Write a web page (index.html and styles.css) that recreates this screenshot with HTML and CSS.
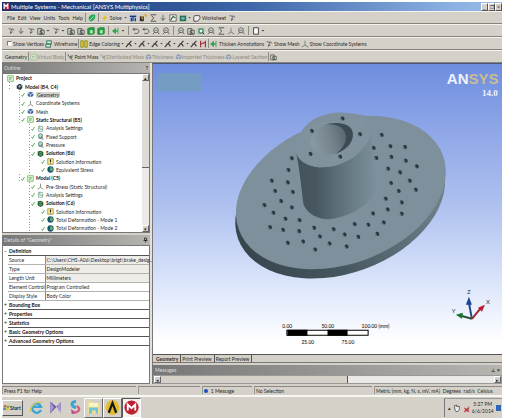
FILE: index.html
```html
<!DOCTYPE html>
<html lang="en">
<head>
<meta charset="utf-8">
<title>Multiple Systems - Mechanical [ANSYS Multiphysics]</title>
<link rel="stylesheet" href="styles.css">
</head>
<body>
<svg class="defs" aria-hidden="true">
  <symbol id="check" viewBox="0 0 10 10"><path d="M1 6l2 3 4-7" fill="none" stroke="#389a3c" stroke-width="1.6"/></symbol>
  <symbol id="cube" viewBox="0 0 10 10"><path d="M1 3l4-2 4 2v4l-4 2-4-2z" fill="#476a9c"/><path d="M1 3l4 2v4M5 5l4-2" stroke="#dbe8f8" fill="none"/></symbol>
  <symbol id="model" viewBox="0 0 10 10"><path d="M1 4l4-3 4 2v4L6 10 1 8z" fill="#303740"/><path d="M3 5l3 1 2-3M5 3v3" stroke="#b8c8d0" fill="none"/></symbol>
  <symbol id="axes" viewBox="0 0 10 10"><path d="M5 1v5L1 9m4-3l4 3" fill="none" stroke="#7f8a7f" stroke-width="1.300"/></symbol>
  <symbol id="env" viewBox="0 0 10 10"><path d="M1 1h8v8H1z" fill="#e9f7de" stroke="#5caf4a"/><path d="M3 4h4M3 6h3" stroke="#338a42"/></symbol>
  <symbol id="set" viewBox="0 0 10 10"><path d="M2 2h6v7H2z" fill="#f4fbf6" stroke="#78a68b"/><path d="M4 1v5h5" fill="none" stroke="#789"/></symbol>
  <symbol id="load" viewBox="0 0 10 10"><circle cx="5" cy="4" r="3" fill="#b9d6cb" stroke="#3d7167"/><path d="M2 7l7 2M6 5l3 3" stroke="#2c6651"/></symbol>
  <symbol id="sol" viewBox="0 0 10 10"><path d="M1 2l4-1 4 2v5l-4 2-4-2z" fill="#285e35"/><path d="M3 4h4M3 7h4" stroke="#9fd79a"/></symbol>
  <symbol id="info" viewBox="0 0 10 10"><path d="M1 1h8v8H1z" fill="#f6e68c" stroke="#988b38"/><path d="M5 2v4m0 1v1" stroke="#202020" stroke-width="1.5"/></symbol>
  <symbol id="result" viewBox="0 0 10 10"><circle cx="5" cy="5" r="4.500" fill="#1d5372"/><path d="M5 1a4 4 0 0 1 2 7L4 6z" fill="#58b663"/></symbol>
  <symbol id="green" viewBox="0 0 10 10"><path d="M1 7C0 2 5 0 9 1c1 5-3 9-7 8z" fill="#28a65b"/><path d="M2 8l5-5" stroke="#c9f4d3"/></symbol>
  <symbol id="bolt" viewBox="0 0 10 10"><path d="M7 0L1 6h3L2 10l6-6H5z" fill="#e6bd20"/></symbol>
  <symbol id="chart" viewBox="0 0 10 10"><path d="M1 1h8v8H1z" fill="#9ab2dc"/><path d="M1 3h8M3 9V5m2 4V3m3 6V5" stroke="#1d3770" stroke-width="1.400"/></symbol>
  <symbol id="tag" viewBox="0 0 10 10"><path d="M1 3h5v6H1z" fill="#28292c"/><path d="M3 4h1v3m2-6h3v3" stroke="#d5a642" stroke-width="1.500" fill="none"/></symbol>
  <symbol id="sigma" viewBox="0 0 10 10"><path d="M2 1h7M2 9h7M3 2l3 3-3 3" fill="none" stroke="#383838"/></symbol>
  <symbol id="down" viewBox="0 0 10 10"><path d="M5 1v7M2 5l3 3 3-3" fill="none" stroke="#555"/></symbol>
  <symbol id="pic" viewBox="0 0 10 10"><path d="M1 1h8v8H1z" fill="#f4f4f4" stroke="#555"/><path d="M2 8l3-5 3 2" fill="none" stroke="#40684d" stroke-width="1.500"/></symbol>
  <symbol id="pic2" viewBox="0 0 10 10"><path d="M1 2h8v7H1z" fill="#247349"/><path d="M3 4h4v3H3z" fill="#74b8d6"/></symbol>
  <symbol id="sheet" viewBox="0 0 10 10"><path d="M2 2h6l1 3-3 4H1V4z" fill="#eee" stroke="#333"/></symbol>
  <symbol id="page" viewBox="0 0 10 10"><path d="M2 1h6v8H2z" fill="#fff" stroke="#222"/></symbol>
  <symbol id="pick" viewBox="0 0 10 10"><path d="M2 2l4 1-2 5M6 2l3 2M4 8l3-2" fill="none" stroke="#4f4f4f"/></symbol>
  <symbol id="pickbox" viewBox="0 0 10 10"><path d="M1 2h5v7H1zM4 4h5v5H4z" fill="#d6e0d4" stroke="#444"/><path d="M4 5l4 4" stroke="#333"/></symbol>
  <symbol id="body" viewBox="0 0 10 10"><path d="M1 2l3-1h5v7l-2 1H1z" fill="#23a945" stroke="#187332"/><path d="M4 4h3v4H4z" fill="#c4edba"/></symbol>
  <symbol id="rotate" viewBox="0 0 10 10"><path d="M3 1L1 3l3 1M2 3c7-2 8 3 5 5H3" fill="none" stroke="#444"/></symbol>
  <symbol id="zoom" viewBox="0 0 10 10"><circle cx="5" cy="4" r="3" fill="#e4e6e6" stroke="#4c4c4c"/><path d="M1 9l3-3m3 0l2 3M3 4h4" stroke="#4c4c4c"/></symbol>
  <symbol id="fit" viewBox="0 0 10 10"><path d="M1 1h8v8H1z" fill="#87b494"/><circle cx="5" cy="5" r="2.500" fill="#e8fff0" stroke="#126335"/><path d="M7 7l2 2" stroke="#111"/></symbol>
  <symbol id="edge" viewBox="0 0 10 10"><path d="M1 9L8 1M3 5h3l2 3" fill="none" stroke="#333" stroke-width="1.300"/></symbol>
  <symbol id="mark" viewBox="0 0 10 10"><path d="M2 1v8M8 1v8M2 5l6-2" stroke="#a2363e" stroke-width="1.500"/></symbol>
  <symbol id="wire" viewBox="0 0 10 10"><path d="M2 1h6v4H2zM1 5h6v4H1z" fill="#cbe6d5" stroke="#236454"/></symbol>
  <symbol id="bars" viewBox="0 0 10 10"><path d="M1 1h3v8H1zM6 1h3v8H6z" fill="#ead128" stroke="#7c831b"/></symbol>
  <symbol id="arrow" viewBox="0 0 10 10"><path d="M0 5l5-4v3h2V1h1v8H7V6H5v3z" fill="#35a34e"/></symbol>
  <symbol id="mass" viewBox="0 0 10 10"><path d="M1 1l3 5m0 0l4-3M4 6l4 3" stroke="#333"/><circle cx="6" cy="5" r="2" fill="#62816b"/></symbol>
</svg>
<div class="window">
  <header class="title"><svg class="icon" viewBox="0 0 10 10"><path d="M0 0h10v10H0z" fill="#b41930"/><path d="M2 9V1l3 4 3-4v8" stroke="#fff" stroke-width="2" fill="none"/></svg>
    <h1>Multiple Systems - Mechanical [ANSYS Multiphysics]</h1>
    <div class="winbtns"><button aria-label="Minimize">_</button><button aria-label="Restore">❐</button><button aria-label="Close">×</button></div>
  </header>
  <nav class="bar menu">
    <div class="menus"><button>File</button><button>Edit</button><button>View</button><button>Units</button><button>Tools</button><button>Help</button></div><i class="sep"></i>
    <button aria-label="Connect"><svg class="icon"><use href="#green"/></svg></button><i class="sep"></i>
    <button><svg class="icon"><use href="#bolt"/></svg>Solve&nbsp; <b class="dd"></b></button>
    <button aria-label="Chart"><svg class="icon"><use href="#chart"/></svg></button>
    <button aria-label="Comment"><svg class="icon"><use href="#tag"/></svg></button>
    <button aria-label="Formula"><svg class="icon"><use href="#sigma"/></svg></button>
    <button aria-label="Insert"><svg class="icon"><use href="#down"/></svg></button>
    <button aria-label="Figure"><svg class="icon"><use href="#pic"/></svg></button>
    <button aria-label="Image"><svg class="icon"><use href="#pic2"/></svg><b class="dd"></b></button>
    <button><svg class="icon"><use href="#sheet"/></svg>Worksheet</button>
    <button aria-label="Information"><svg class="icon"><use href="#pick"/></svg></button>
  </nav>
  <div class="bar picks">
    <button aria-label="Label"><svg class="icon"><use href="#pick"/></svg></button>
    <button aria-label="Direction"><svg class="icon"><use href="#down"/></svg></button>
    <button aria-label="Coordinates"><svg class="icon"><use href="#pick"/></svg></button>
    <button aria-label="Select mode"><svg class="icon"><use href="#pickbox"/></svg><b class="dd"></b></button>
    <button aria-label="Select type"><svg class="icon"><use href="#pick"/></svg><b class="dd"></b></button>
    <button aria-label="Vertex"><svg class="icon"><use href="#pickbox"/></svg></button>
    <button aria-label="Edge"><svg class="icon"><use href="#pickbox"/></svg></button>
    <button aria-label="Face"><svg class="icon"><use href="#body"/></svg></button>
    <button aria-label="Body"><svg class="icon"><use href="#body"/></svg></button><i class="sep"></i>
    <button aria-label="Extend"><svg class="icon"><use href="#arrow"/></svg><b class="dd"></b></button><i class="sep"></i>
    <button aria-label="Rotate"><svg class="icon"><use href="#rotate"/></svg></button>
    <button aria-label="Pan"><svg class="icon"><use href="#rotate"/></svg></button>
    <button aria-label="Zoom"><svg class="icon"><use href="#zoom"/></svg></button>
    <button aria-label="Box zoom"><svg class="icon"><use href="#zoom"/></svg></button><i class="sep"></i>
    <button aria-label="Fit"><svg class="icon"><use href="#zoom"/></svg></button>
    <button aria-label="Magnifier"><svg class="icon"><use href="#pickbox"/></svg></button>
    <button aria-label="Zoom selection"><svg class="icon"><use href="#fit"/></svg></button>
    <button aria-label="Previous view"><svg class="icon"><use href="#zoom"/></svg></button>
    <button aria-label="Next view"><svg class="icon"><use href="#sigma"/></svg></button>
    <button aria-label="Isometric"><svg class="icon"><use href="#axes"/></svg></button>
    <button aria-label="Look at"><svg class="icon"><use href="#zoom"/></svg></button><i class="sep"></i>
    <button aria-label="Viewports"><svg class="icon"><use href="#page"/></svg><b class="dd"></b></button>
  </div>
  <div class="bar view">
    <label><input type="checkbox">Show Vertices</label>
    <button><svg class="icon"><use href="#wire"/></svg>Wireframe</button><i class="sep"></i>
    <button><svg class="icon"><use href="#bars"/></svg>Edge Coloring <b class="dd"></b></button>
    <button aria-label="Free edges"><svg class="icon"><use href="#edge"/></svg><b class="dd"></b></button>
    <button aria-label="Single edges"><svg class="icon"><use href="#edge"/></svg><b class="dd"></b></button>
    <button aria-label="Double edges"><svg class="icon"><use href="#edge"/></svg><b class="dd"></b></button>
    <button aria-label="Triple edges"><svg class="icon"><use href="#edge"/></svg><b class="dd"></b></button>
    <button aria-label="Multiple edges"><svg class="icon"><use href="#edge"/></svg><b class="dd"></b></button>
    <button aria-label="Thick edges"><svg class="icon"><use href="#edge"/></svg></button>
    <button aria-label="Edge direction"><svg class="icon"><use href="#mark"/></svg></button><i class="sep"></i>
    <button><svg class="icon"><use href="#arrow"/></svg>Thicken Annotations</button>
    <button><svg class="icon"><use href="#pick"/></svg>Show Mesh</button>
    <button><svg class="icon"><use href="#axes"/></svg>Show Coordinate Systems</button>
  </div>
  <div class="bar context">
    <span>Geometry</span><i class="sep"></i>
    <button disabled><svg class="icon"><use href="#env"/></svg>Virtual Body</button><i class="sep"></i>
    <button><svg class="icon"><use href="#mass"/></svg>Point Mass</button>
    <button disabled><svg class="icon"><use href="#mass"/></svg>Distributed Mass</button>
    <button disabled><svg class="icon"><use href="#cube"/></svg>Thickness</button>
    <button disabled><svg class="icon"><use href="#cube"/></svg>Imported Thickness</button>
    <button disabled><svg class="icon"><use href="#cube"/></svg>Layered Section</button><i class="sep"></i>
    <button aria-label="Options"><svg class="icon"><use href="#pickbox"/></svg></button>
  </div>
  <main class="work">
    <aside class="side">
      <h2 class="head"><span>Outline</span><b>?</b></h2>
      <div class="outline">
        <ul class="tree">
          <li class="l0 strong"><svg class="icon"><use href="#env"/></svg>Project</li>
          <li class="l1 strong"><svg class="icon"><use href="#model"/></svg>Model (B4, C4)</li>
          <li class="l2"><svg class="tick"><use href="#check"/></svg><svg class="icon"><use href="#cube"/></svg><span class="sel">Geometry</span></li>
          <li class="l2"><svg class="tick"><use href="#check"/></svg><svg class="icon"><use href="#axes"/></svg>Coordinate Systems</li>
          <li class="l2"><svg class="tick"><use href="#check"/></svg><svg class="icon"><use href="#cube"/></svg>Mesh</li>
          <li class="l2 strong"><svg class="tick"><use href="#check"/></svg><svg class="icon"><use href="#env"/></svg>Static Structural (B5)</li>
          <li class="l3"><svg class="tick"><use href="#check"/></svg><svg class="icon"><use href="#set"/></svg>Analysis Settings</li>
          <li class="l3"><svg class="tick"><use href="#check"/></svg><svg class="icon"><use href="#load"/></svg>Fixed Support</li>
          <li class="l3"><svg class="tick"><use href="#check"/></svg><svg class="icon"><use href="#load"/></svg>Pressure</li>
          <li class="l3 strong"><svg class="tick"><use href="#check"/></svg><svg class="icon"><use href="#sol"/></svg>Solution (B6)</li>
          <li class="l4"><svg class="tick"><use href="#check"/></svg><svg class="icon"><use href="#info"/></svg>Solution Information</li>
          <li class="l4"><svg class="tick"><use href="#check"/></svg><svg class="icon"><use href="#result"/></svg>Equivalent Stress</li>
          <li class="l2 strong"><svg class="tick"><use href="#check"/></svg><svg class="icon"><use href="#env"/></svg>Modal (C5)</li>
          <li class="l3"><svg class="tick"><use href="#check"/></svg><svg class="icon"><use href="#axes"/></svg>Pre-Stress (Static Structural)</li>
          <li class="l3"><svg class="tick"><use href="#check"/></svg><svg class="icon"><use href="#set"/></svg>Analysis Settings</li>
          <li class="l3 strong"><svg class="tick"><use href="#check"/></svg><svg class="icon"><use href="#sol"/></svg>Solution (C6)</li>
          <li class="l4"><svg class="tick"><use href="#check"/></svg><svg class="icon"><use href="#info"/></svg>Solution Information</li>
          <li class="l4"><svg class="tick"><use href="#check"/></svg><svg class="icon"><use href="#result"/></svg>Total Deformation - Mode 1</li>
          <li class="l4"><svg class="tick"><use href="#check"/></svg><svg class="icon"><use href="#result"/></svg>Total Deformation - Mode 2</li>
        </ul>
        <div class="vscroll"><button aria-label="Scroll up">▴</button><span class="vthumb"></span><span class="vtrack"></span><button aria-label="Scroll down">▾</button></div>
      </div>
      <h2 class="head gap"><span>Details of "Geometry"</span><svg class="pin" viewBox="0 0 10 10"><path d="M3 1h4v5H3zM1 6h8M5 6v4" fill="none" stroke="#222" stroke-width="1.500"/></svg></h2>
      <div class="details">
        <table>
          <colgroup><col class="c-ex"><col class="c-key"><col></colgroup>
          <tr><td class="ex">−</td><th colspan="2">Definition</th></tr>
          <tr class="ro"><td class="ex"></td><td class="key">Source</td><td>C:\Users\CHS-A06\Desktop\brigt\brake_desig...</td></tr>
          <tr class="ro"><td class="ex"></td><td class="key">Type</td><td>DesignModeler</td></tr>
          <tr class="ro"><td class="ex"></td><td class="key">Length Unit</td><td>Millimeters</td></tr>
          <tr><td class="ex"></td><td class="key">Element Control</td><td>Program Controlled</td></tr>
          <tr><td class="ex"></td><td class="key">Display Style</td><td>Body Color</td></tr>
          <tr><td class="ex">+</td><th colspan="2">Bounding Box</th></tr>
          <tr><td class="ex">+</td><th colspan="2">Properties</th></tr>
          <tr><td class="ex">+</td><th colspan="2">Statistics</th></tr>
          <tr><td class="ex">+</td><th colspan="2">Basic Geometry Options</th></tr>
          <tr><td class="ex">+</td><th colspan="2">Advanced Geometry Options</th></tr>
        </table>
      </div>
    </aside>
    <section class="stage">
      <svg class="scene" viewBox="0 0 348 289" preserveAspectRatio="xMidYMid meet" role="img" aria-label="Brake disc model">
        <defs>
          <linearGradient id="cyl"><stop offset="0" stop-color="#43525c"/><stop offset=".25" stop-color="#485861"/><stop offset=".6" stop-color="#62757f"/><stop offset="1" stop-color="#7c909b"/></linearGradient>
          <linearGradient id="rim"><stop offset="0" stop-color="#37454e"/><stop offset=".4" stop-color="#45565f"/><stop offset="1" stop-color="#74858f"/></linearGradient>
          <linearGradient id="bore"><stop offset="0" stop-color="#8b9ba5"/><stop offset=".5" stop-color="#74838c"/><stop offset="1" stop-color="#4c5b64"/></linearGradient>
          <g id="hole"><circle r="6.500" fill="#5b6d77"/><path d="M-5-4a6 6 0 0 1 9 1 6 6 0 0 1-3 9z" fill="#263640"/></g>
        </defs>
        <rect x="5" y="9" width="43" height="18" fill="#759dc4"/>
        <g transform="translate(76 36) scale(.3333)">
          <ellipse cx="332" cy="304" rx="325" ry="214" transform="rotate(-20 332 304)" fill="url(#rim)"/>
          <ellipse cx="334" cy="276" rx="325" ry="214" transform="rotate(-20 334 276)" fill="#7d909c"/>
          <path d="M214 96C240 55 285 36 338 37C365 38 382 43 400 44L424 95L208 170z" fill="#7d909c"/>
          <path d="M201 160C220 207 300 212 350 183C395 160 415 130 424 98C430 130 439 220 438 268C438 300 365 351 300 356C258 356 226 333 221 305C216 260 210 205 201 160z" fill="url(#cyl)"/>
          <path d="M201 160C220 207 300 212 350 183C395 160 415 130 424 98L395 50L250 70L200 110z" fill="#7f929e"/>
          <ellipse cx="306" cy="117" rx="64" ry="45" transform="rotate(-15 306 117)" fill="url(#bore)"/>
          <path d="M280 75C330 60 366 72 370 98C372 128 344 151 318 161C360 133 360 84 318 74C305 71 292 72 280 75z" fill="#3b4a54"/>
          <g class="holes">
            <use href="#hole" x="339" y="55"/><use href="#hole" x="247" y="92"/><use href="#hole" x="391" y="102"/><use href="#hole" x="243" y="161"/><use href="#hole" x="332" y="169"/>
            <use href="#hole" x="456" y="104"/><use href="#hole" x="432" y="143"/><use href="#hole" x="482" y="138"/><use href="#hole" x="526" y="140"/><use href="#hole" x="440" y="173"/><use href="#hole" x="485" y="170"/><use href="#hole" x="528" y="181"/><use href="#hole" x="561" y="198"/><use href="#hole" x="475" y="205"/><use href="#hole" x="511" y="216"/><use href="#hole" x="540" y="241"/><use href="#hole" x="484" y="248"/><use href="#hole" x="558" y="268"/><use href="#hole" x="507" y="272"/><use href="#hole" x="468" y="295"/><use href="#hole" x="516" y="306"/><use href="#hole" x="474" y="327"/><use href="#hole" x="516" y="340"/><use href="#hole" x="430" y="339"/><use href="#hole" x="462" y="366"/><use href="#hole" x="416" y="373"/><use href="#hole" x="375" y="371"/><use href="#hole" x="443" y="400"/><use href="#hole" x="386" y="409"/><use href="#hole" x="345" y="402"/><use href="#hole" x="312" y="386"/><use href="#hole" x="351" y="438"/><use href="#hole" x="300" y="429"/><use href="#hole" x="271" y="408"/><use href="#hole" x="254" y="382"/><use href="#hole" x="257" y="447"/><use href="#hole" x="221" y="423"/><use href="#hole" x="209" y="392"/><use href="#hole" x="210" y="359"/><use href="#hole" x="175" y="427"/><use href="#hole" x="161" y="388"/><use href="#hole" x="168" y="355"/><use href="#hole" x="187" y="321"/><use href="#hole" x="122" y="380"/><use href="#hole" x="132" y="337"/><use href="#hole" x="155" y="302"/><use href="#hole" x="190" y="275"/><use href="#hole" x="105" y="314"/><use href="#hole" x="137" y="272"/><use href="#hole" x="175" y="246"/><use href="#hole" x="127" y="241"/><use href="#hole" x="177" y="209"/><use href="#hole" x="187" y="174"/>
          </g>
        </g>
        <g class="brand"><text x="293" y="20">AN<tspan class="gold">SYS</tspan></text><text class="ver" x="328" y="32">14.0</text></g>
        <g class="ruler">
          <path d="M133.500 265.500h81v5h-81z" fill="#fff" stroke="#000"/><path d="M134 265h20v6h-20zM174 265h20v6h-20z"/>
          <text x="129" y="263">0.00</text><text x="168" y="263">50.00</text><text x="208" y="263">100.00 (mm)</text><text x="148" y="279">25.00</text><text x="188" y="279">75.00</text>
        </g>
        <g class="triad">
          <path d="M318 254l-3-16" stroke="#26478e" stroke-width="2"/><path d="M312 240l3-8 3 8z" fill="#174594"/>
          <path d="M318 254l9-11" stroke="#992c38" stroke-width="2"/><path d="M324 243l7-3-3 7z" fill="#c1182f"/>
          <path d="M318 254l-11-3" stroke="#2c5338" stroke-width="2"/><path d="M302 250l7-2-1 6z" fill="#147528"/>
          <text x="313" y="229">Z</text><text x="332" y="239">X</text><text x="298" y="248">Y</text>
        </g>
      </svg>
      <div class="tabs"><button class="on">Geometry</button><button>Print Preview</button><button>Report Preview</button></div>
      <h2 class="head msg"><span>Messages</span><b>⊥ &nbsp;×</b></h2>
      <div class="hscroll"><button aria-label="Scroll left">◂</button><span class="hthumb"></span><span class="htrack"></span><button aria-label="Scroll right">▸</button></div>
    </section>
  </main>
  <footer class="status"><span>Press F1 for Help</span><span></span><span><i class="dot"></i>1 Message</span><span>No Selection</span><span>Metric (mm, kg, N, s, mV, mA)&nbsp; Degrees&nbsp; rad/s&nbsp; Celsius</span></footer>
  <div class="taskbar">
    <button class="start"><svg viewBox="0 0 16 16"><path d="M2 3q4-2 6 0l-1 5q-3-2-6 0z" fill="#dc5d2b"/><path d="M9 4q3 1 6-1l-1 5q-3 2-6 0z" fill="#69a83b"/><path d="M1 9q3-2 6 0l-1 5q-3-2-6 0z" fill="#548bc9"/><path d="M8 9q3 2 6 0l-1 5q-3 2-6 0z" fill="#e3bd39"/></svg>Start</button>
    <button class="task" aria-label="Internet Explorer"><svg viewBox="0 0 20 20"><path d="M16 13A6 6 0 1 1 16 9H6" fill="none" stroke="#37a4d5" stroke-width="3"/><path d="M2 16C1 8 11 1 18 3" fill="none" stroke="#d7c64c" stroke-width="1.500"/></svg></button>
    <button class="task" aria-label="Media player"><svg viewBox="0 0 20 20"><path d="M3 2l14 12V3L3 18z" fill="#6554a4"/><path d="M3 2v16l5-8zM17 2v16l-5-8z" fill="#a29bcf"/></svg></button>
    <button class="task" aria-label="Sync"><svg viewBox="0 0 20 20"><path d="M12 2C3 3 7 9 12 10" fill="none" stroke="#37a5d5" stroke-width="4"/><path d="M13 8c7 4 2 10-7 9" fill="none" stroke="#d85a7d" stroke-width="3"/><path d="M5 12l2 7 4-3z" fill="#b75396"/></svg></button>
    <button class="task open" aria-label="Explorer"><svg viewBox="0 0 20 20"><path d="M2 2h7l2 2h7v14H2z" fill="#eee18c"/><path d="M4 4h12v5H4z" fill="#f8f4ce"/><path d="M4 10h12v8h-3v-4H8v4H4z" fill="#72c2df"/></svg></button>
    <button class="task open" aria-label="Workbench"><svg viewBox="0 0 20 20"><ellipse cx="10" cy="10" rx="9" ry="10" fill="#e2bd32"/><path d="M5 17l5-13 5 13" fill="none" stroke="#191919" stroke-width="3"/></svg></button>
    <button class="task active" aria-label="Mechanical"><svg viewBox="0 0 20 20"><circle cx="10" cy="10" r="9.500" fill="#bd2030"/><path d="M5 14V6l5 5 5-5v8" fill="none" stroke="#fff" stroke-width="2.500"/></svg></button>
    <div class="tray"><span>▴</span><svg viewBox="0 0 10 12"><path d="M2 2l3-1v2h4v5l-3 3-3-2z" fill="#eee" stroke="#333"/></svg><svg viewBox="0 0 10 12"><path d="M1 10L9 2v8z" fill="#b88686"/><path d="M2 5l6 6M8 5l-6 6" stroke="#c62632" stroke-width="1.500"/></svg><time>5:27 PM<br>6/6/2014</time><i class="desk"></i></div>
  </div>
</div>
</body>
</html>
```
FILE: styles.css
```css
* { box-sizing: border-box; }
body {
  margin: 0;
  height: 100vh;
  padding: 2px 3px 2px 2px;
  background: #fff;
  color: #2a2a2a;
  font: 5px/6px Lato, "Liberation Sans", sans-serif;
}
button { margin: 0; padding: 0; border: 0; background: none; color: inherit; font: inherit; display: flex; align-items: center; gap: 1px; white-space: nowrap; }
button:disabled { color: #8a8882; }
button:disabled svg { opacity: .5; }
h1, h2, ul { margin: 0; padding: 0; font-size: inherit; font-weight: normal; }
.defs { position: absolute; width: 0; height: 0; }
.icon { width: 8px; height: 8px; flex: none; }
.window { height: 100%; display: flex; flex-direction: column; background: #d5d1c8; }

.title { height: 9px; display: flex; align-items: center; gap: 2px; padding-left: 1px; color: #fff; background: linear-gradient(90deg, #17326f, #3f68aa 50%, #8bb0e2 90%, #9bbbe6); }
.title h1 { flex: 1; font-size: 5px; font-weight: bold; }
.title .icon { width: 6px; height: 7px; }
.winbtns { display: flex; height: 8px; }
.winbtns button { width: 7px; justify-content: center; background: #d5d1c8; color: #111; border: 1px solid; border-color: #fff #555 #555 #fff; }

.bar { height: 13px; display: flex; align-items: center; padding: 0 3px; border-top: 1px solid #f5f3ee; border-bottom: 1px solid #86837d; }
.sep { width: 1px; height: 9px; background: #8f8c86; flex: none; }
.dd { width: 3px; height: 2px; background: #444; clip-path: polygon(0 0, 100% 0, 50% 100%); }
.menus { display: flex; gap: 3px; padding-left: 2px; }
.menu { gap: 2px; }
.title h1 { font-size: 6px; font-weight: normal; }
.picks { gap: 2px; padding-left: 5px; }
.picks .dd { width: 4px; }
.picks .sep { margin: 0 1px; }
.view label { display: flex; align-items: center; gap: 1px; padding-left: 2px; }
.view input { appearance: none; width: 5px; height: 5px; margin: 0; border: 1px solid; border-color: #777 #eee #eee #777; background: #fff; }
.view { gap: 1px; }
.context { gap: 1px; }
.context .icon { width: 7px; }
.context button { gap: 0; }

.work { flex: 1; min-height: 0; display: grid; grid-template-columns: 150fr 350fr; }
.side { min-width: 0; min-height: 0; display: flex; flex-direction: column; border-right: 2px solid #e4e1dc; }
.head { height: 10px; flex: none; display: flex; align-items: center; justify-content: space-between; padding: 0 2px; color: #dedede; background: linear-gradient(90deg, #777, #b7b5b1); }
.head b { color: #222; }
.pin { width: 5px; height: 6px; }
.gap { margin-top: 2px; }
.outline { flex: 160; min-height: 0; display: flex; background: #fff; border: 1px solid #777; }
.tree { flex: 1; display: grid; grid-auto-rows: 1fr; list-style: none; padding-left: 4px; white-space: nowrap; }
.tree li { display: flex; align-items: center; gap: 1px; min-height: 0; background: repeating-linear-gradient(180deg, #999 0 1px, transparent 1px 3px) 2px 0 / 1px 100% no-repeat; }
.tree .tick { width: 5px; height: 7px; flex: none; }
.tree .icon { width: 7px; height: 7px; margin-right: 1px; }
.strong { font-weight: bold; color: #111; }
.tree .l0 { background: none; }
.l1 { padding-left: 9px; }
.l2 { padding-left: 14px; }
.tree .l2 { background-position: 12px 0; }
.l3 { padding-left: 24px; }
.tree .l3, .tree .l4 { background-position: 22px 0; }
.l4 { padding-left: 34px; }
.sel { background: #d9d6cf; padding: 0 1px; }
.vscroll { width: 7px; display: flex; flex-direction: column; background: #eceae6; }
.vscroll button, .hscroll button { width: 7px; height: 7px; justify-content: center; background: #d5d1c8; border: 1px solid; border-color: #fff #666 #666 #fff; }
.vthumb { flex: 3; background: #dedbd5; border-bottom: 1px solid #666; }
.vtrack { flex: 2; }

.details { flex: 138; min-height: 0; background: #fff; border: 1px solid #777; }
table { width: 100%; border-collapse: collapse; table-layout: fixed; white-space: nowrap; }
.c-ex { width: 5px; }
.c-key { width: 37px; }
td, th { height: 9px; padding: 0 0 0 1px; text-align: left; border-bottom: 1px solid #b5b3af; }
th { border-color: #555; color: #111; }
td.ex { border: 0; color: #111; }
td.key { border-right: 1px solid #888; }
.ro td:last-child { background: #eeede8; }

.stage { min-width: 0; min-height: 0; display: flex; flex-direction: column; border-top: 1px solid #4a5779; border-left: 1px solid #777; background: #d5d1c8; }
.scene { flex: 1; min-height: 0; width: 100%; background: linear-gradient(#6e8ddf, #91a9e8 25%, #b0c2f0 50%, #dae4fa 75%, #fff 96%); }
.brand { font: bold 15px "Liberation Sans", sans-serif; fill: #eef2ff; }
.brand .gold { fill: #cabd91; }
.brand .ver { font: bold 9px "Liberation Serif", serif; }
.ruler { font-size: 5px; fill: #000; }
.triad { font-size: 6px; fill: #23365b; }
.tabs { height: 9px; flex: none; display: flex; padding-left: 3px; border-top: 1px solid #555; border-bottom: 1px solid #777; }
.tabs button { padding-right: 2px; border-right: 1px solid #555; margin-right: 1px; }
.tabs .on { font-weight: bold; }
.msg { margin-top: 2px; }
.hscroll { height: 9px; flex: none; display: flex; align-items: center; border: 1px solid #999; }
.hthumb { flex: 56; height: 7px; border-right: 1px solid #555; background: #d5d1c8; }
.htrack { flex: 44; height: 7px; background: #ebe9e5; }

.status { height: 12px; flex: none; display: grid; grid-template-columns: 136fr 63fr 51fr 120fr 130fr; gap: 2px; padding: 2px 0 1px; border-bottom: 1px solid #f8f8f4; }
.status span { display: flex; align-items: center; padding-left: 1px; border-top: 1px solid #888; border-left: 1px solid #999; white-space: nowrap; }
.dot { width: 4px; height: 4px; margin-right: 3px; border-radius: 50%; background: #1c4eb5; }
.taskbar { height: 22px; flex: none; display: flex; align-items: center; border-top: 1px solid #f7f5f0; }
.start { width: 21px; height: 16px; border: 1px solid; border-color: #fff #555 #555 #fff; font-weight: bold; margin-right: 4px; gap: 0; }
.start svg { width: 7px; height: 9px; flex: none; }
.task { width: 19px; height: 20px; justify-content: center; }
.task svg { width: 15px; height: 15px; }
.open { border: 1px solid; border-color: #fff #666 #666 #fff; }
.active { border: 1px solid; border-color: #555 #fff #fff #555; background: #f4f2f0; }
.tray { margin-left: auto; height: 19px; width: 58px; display: flex; align-items: center; justify-content: space-between; padding: 0 1px 0 3px; border-left: 1px solid #777; border-top: 1px solid #999; }
.tray svg { width: 7px; height: 9px; }
.tray time { font-size: 5px; line-height: 7px; text-align: center; }
.desk { width: 5px; height: 6px; background: #2e67b8; }
```
